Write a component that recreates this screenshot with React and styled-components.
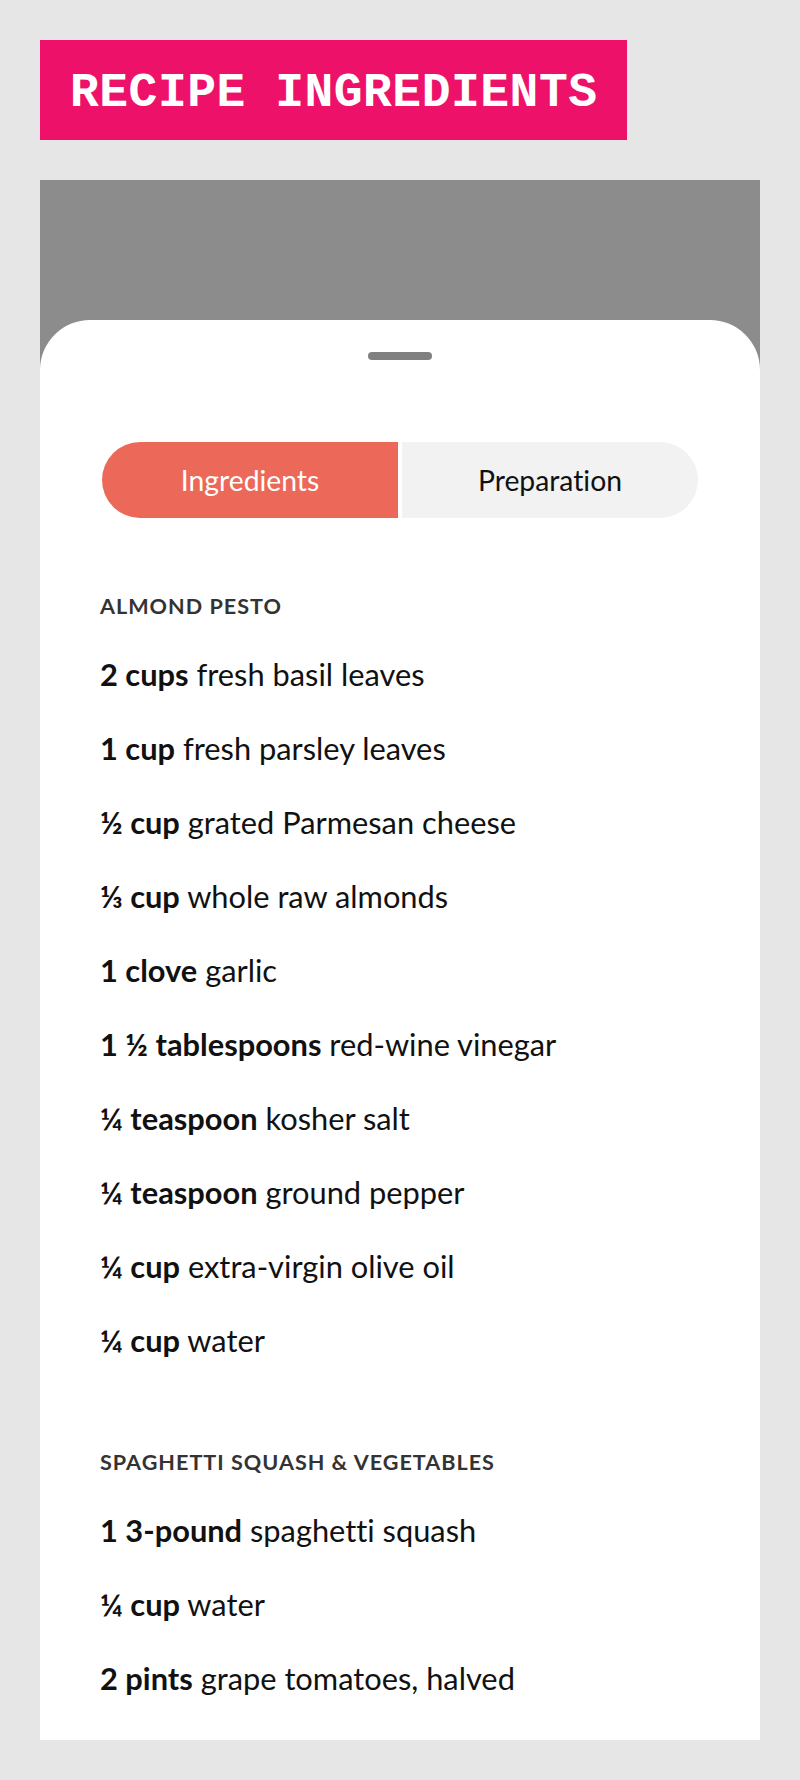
import React from "react";
import styled, { createGlobalStyle } from "styled-components";

const GlobalStyle = createGlobalStyle`
  html, body { margin: 0; padding: 0; background: #e6e6e6; }
  * { box-sizing: border-box; }
`;

const Page = styled.div`
  width: 800px;
  min-height: 1780px;
  padding: 40px;
  background: #e6e6e6;
  font-family: Lato, "Noto Sans", sans-serif;
  font-variant-ligatures: no-common-ligatures;
`;

const Title = styled.h1`
  display: inline-block;
  margin: 0;
  height: 100px;
  padding: 33px 30px 27px;
  background: #ee1169;
  color: #ffffff;
  font-family: "Liberation Mono", "DejaVu Sans Mono", monospace;
  font-weight: 700;
  font-size: 48px;
  line-height: 40px;
  letter-spacing: 0.5px;
  white-space: nowrap;
`;

const Stage = styled.div`
  margin-top: 40px;
  background: #8c8c8c;
  padding-top: 140px;
`;

const Sheet = styled.div`
  background: #ffffff;
  border-radius: 50px 50px 0 0;
  padding: 32px 60px 24px;
`;

const Handle = styled.div`
  width: 64px;
  height: 8px;
  border-radius: 4px;
  background: #808080;
  margin: 0 auto;
`;

const Tabs = styled.div`
  display: flex;
  gap: 4px;
  margin: 82px 2px 0;
`;

const Tab = styled.button`
  flex: 1;
  height: 76px;
  border: none;
  padding: 0;
  margin: 0;
  font-family: Lato, "Noto Sans", sans-serif;
  font-variant-ligatures: no-common-ligatures;
  font-size: 28.3px;
  font-weight: 400;
  cursor: pointer;
  background: ${(p) => (p.$active ? "#ec6858" : "#f2f2f2")};
  color: ${(p) => (p.$active ? "#ffffff" : "#111111")};
  border-radius: ${(p) => (p.$side === "left" ? "38px 0 0 38px" : "0 38px 38px 0")};
`;

const Section = styled.section`
  margin-top: ${(p) => p.$gap}px;
`;

const Heading = styled.h2`
  margin: 0;
  height: 24px;
  font-size: 21.6px;
  line-height: 24px;
  font-weight: 700;
  letter-spacing: 1px;
  text-transform: uppercase;
  color: #333333;
`;

const List = styled.ul`
  list-style: none;
  margin: 20px 0 0;
  padding: 0;
`;

const Item = styled.li`
  height: 74px;
  line-height: 74px;
  font-size: 30.8px;
  color: #111111;
  white-space: nowrap;
`;

const Amount = styled.strong`
  font-weight: 700;
`;

const sections = [
  {
    title: "Almond Pesto",
    gap: 76,
    items: [
      ["2 cups", "fresh basil leaves"],
      ["1 cup", "fresh parsley leaves"],
      ["½ cup", "grated Parmesan cheese"],
      ["⅓ cup", "whole raw almonds"],
      ["1 clove", "garlic"],
      ["1 ½ tablespoons", "red-wine vinegar"],
      ["¼ teaspoon", "kosher salt"],
      ["¼ teaspoon", "ground pepper"],
      ["¼ cup", "extra-virgin olive oil"],
      ["¼ cup", "water"],
    ],
  },
  {
    title: "Spaghetti Squash & Vegetables",
    gap: 72,
    items: [
      ["1 3-pound", "spaghetti squash"],
      ["¼ cup", "water"],
      ["2 pints", "grape tomatoes, halved"],
    ],
  },
];

export default function App() {
  return (
    <>
      <GlobalStyle />
      <Page>
        <Title>RECIPE INGREDIENTS</Title>
        <Stage>
          <Sheet>
            <Handle />
            <Tabs>
              <Tab $active $side="left">Ingredients</Tab>
              <Tab $side="right">Preparation</Tab>
            </Tabs>
            {sections.map((s) => (
              <Section key={s.title} $gap={s.gap}>
                <Heading>{s.title}</Heading>
                <List>
                  {s.items.map(([a, b], i) => (
                    <Item key={i}>
                      <Amount>{a}</Amount> {b}
                    </Item>
                  ))}
                </List>
              </Section>
            ))}
          </Sheet>
        </Stage>
      </Page>
    </>
  );
}
